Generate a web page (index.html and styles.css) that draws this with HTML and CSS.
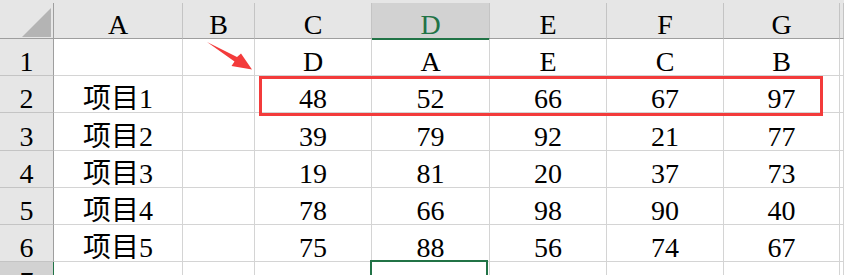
FILE: index.html
```html
<html lang="zh-CN">
    <head>
        <title>Sheet1</title>
        <meta charset="UTF-8" />
        <link rel="stylesheet" href="styles.css">
    </head>

    <body>
        <div class="page">
            <div class="strip"></div>

            <div class="sheet">
                <!-- column headers -->
                <div class="corner"><span class="select-all"></span></div>
                <div class="col-head">A</div>
                <div class="col-head">B</div>
                <div class="col-head">C</div>
                <div class="col-head active">D</div>
                <div class="col-head">E</div>
                <div class="col-head">F</div>
                <div class="col-head">G</div>
                <div class="col-head"></div>

                <div class="row-head">1</div>
                <div class="cell"></div>
                <div class="cell"></div>
                <div class="cell">D</div>
                <div class="cell">A</div>
                <div class="cell">E</div>
                <div class="cell">C</div>
                <div class="cell">B</div>
                <div class="cell"></div>

                <div class="row-head">2</div>
                <div class="cell">项目1</div>
                <div class="cell"></div>
                <div class="cell">48</div>
                <div class="cell">52</div>
                <div class="cell">66</div>
                <div class="cell">67</div>
                <div class="cell">97</div>
                <div class="cell"></div>

                <div class="row-head">3</div>
                <div class="cell">项目2</div>
                <div class="cell"></div>
                <div class="cell">39</div>
                <div class="cell">79</div>
                <div class="cell">92</div>
                <div class="cell">21</div>
                <div class="cell">77</div>
                <div class="cell"></div>

                <div class="row-head">4</div>
                <div class="cell">项目3</div>
                <div class="cell"></div>
                <div class="cell">19</div>
                <div class="cell">81</div>
                <div class="cell">20</div>
                <div class="cell">37</div>
                <div class="cell">73</div>
                <div class="cell"></div>

                <div class="row-head">5</div>
                <div class="cell">项目4</div>
                <div class="cell"></div>
                <div class="cell">78</div>
                <div class="cell">66</div>
                <div class="cell">98</div>
                <div class="cell">90</div>
                <div class="cell">40</div>
                <div class="cell"></div>

                <div class="row-head">6</div>
                <div class="cell">项目5</div>
                <div class="cell"></div>
                <div class="cell">75</div>
                <div class="cell">88</div>
                <div class="cell">56</div>
                <div class="cell">74</div>
                <div class="cell">67</div>
                <div class="cell"></div>

                <div class="row-head active">7</div>
                <div class="cell"></div>
                <div class="cell"></div>
                <div class="cell"></div>
                <div class="cell selected"></div>
                <div class="cell"></div>
                <div class="cell"></div>
                <div class="cell"></div>
                <div class="cell"></div>
            </div>

            <!-- annotation: arrow + box around row 2 -->
            <svg class="arrow" width="844" height="275" viewBox="0 0 844 275">
                <polygon points="207,42 237,57 241,53.5 252,69.5 231.5,66 234.5,61.5" />
            </svg>
            <div class="mark"></div>
        </div>
    </body>
</html>
```

FILE: styles.css
```css
html, body {
    margin: 0;
    background: #fff;
    overflow: hidden;
}

.page {
    position: relative;
    width: 844px;
    height: 275px;
    overflow: hidden;
}

.strip {
    height: 3px;
    background: #e6e6e6;
}

.sheet {
    display: grid;
    grid-template-columns: 54px 129px 72px 117px 118px 117px 117px 116px 1fr;
    grid-template-rows: 36px 37px 37px 38px 37px 37px 37px 34px;
    font-family: "Liberation Serif", "Noto Sans CJK SC", serif;
    font-size: 28px;
    line-height: 26px;
    color: #000;
}

.sheet > div {
    box-sizing: border-box;
    display: flex;
    align-items: flex-end;
    justify-content: center;
    white-space: nowrap;
}

.cell {
    border-right: 1px solid #d4d4d4;
    border-bottom: 1px solid #d4d4d4;
}

.col-head {
    background: #e6e6e6;
    border-right: 1px solid #c4c4c4;
    border-bottom: 1px solid #9e9e9e;
}

.col-head.active {
    background: #d2d2d2;
    color: #217346;
    border-bottom-color: #217346;
    box-shadow: 0 1px 0 #217346;
}

.row-head {
    background: #e6e6e6;
    border-right: 1px solid #9e9e9e;
    border-bottom: 1px solid #c4c4c4;
}

.row-head.active {
    background: #d2d2d2;
    border-right-color: #217346;
}

.corner {
    background: #e6e6e6;
    border-right: 1px solid #9e9e9e;
    border-bottom: 1px solid #9e9e9e;
}

.corner.corner {
    justify-content: flex-end;
}

.select-all {
    width: 29px;
    height: 29px;
    margin: 0 2px 1px 0;
    background: #b4b4b4;
    clip-path: polygon(100% 0, 100% 100%, 0 100%);
}

.selected {
    position: relative;
}

.selected::after {
    content: "";
    position: absolute;
    left: -2px;
    top: -2px;
    right: 1px;
    bottom: -4px;
    border: 2px solid #217346;
}

.arrow {
    position: absolute;
    left: 0;
    top: 0;
}

.arrow polygon {
    fill: #f33b3b;
}

.mark {
    position: absolute;
    left: 259px;
    top: 76px;
    width: 564px;
    height: 40px;
    box-sizing: border-box;
    border: 3px solid #f33b3b;
}
```
